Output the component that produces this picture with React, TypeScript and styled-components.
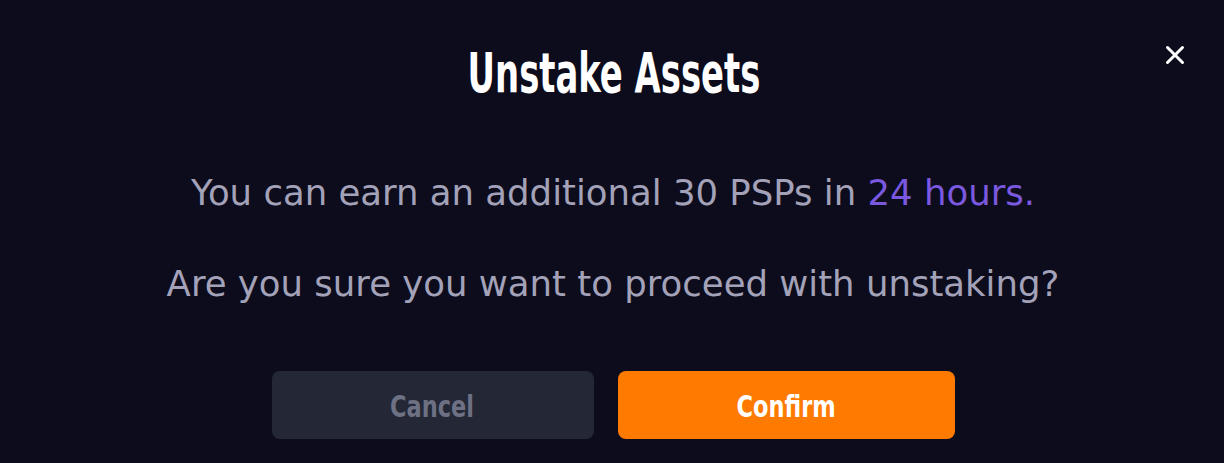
import React from 'react';
import styled, { createGlobalStyle } from 'styled-components';

const GlobalStyle = createGlobalStyle`
  html, body {
    margin: 0;
    padding: 0;
    background: #0c0c1d;
  }
`;

const Modal = styled.div`
  position: relative;
  width: 1224px;
  height: 463px;
  box-sizing: border-box;
  background: #0c0c1d;
  display: flex;
  flex-direction: column;
  align-items: center;
  padding-top: 41px;
`;

// narrow display face: no condensed font is installed, so squeeze a bold sans
const Title = styled.h2`
  margin: 0;
  font-family: 'DejaVu Sans', sans-serif;
  font-weight: 700;
  font-size: 55px;
  line-height: 64px;
  color: #ffffff;
  transform: translateX(2px) scaleX(0.615);
  white-space: nowrap;
`;

const CloseButton = styled.button`
  position: absolute;
  top: 43px;
  right: 37px;
  width: 24px;
  height: 24px;
  padding: 0;
  border: 0;
  background: transparent;
  cursor: pointer;
  display: flex;
  align-items: center;
  justify-content: center;
`;

const Message = styled.p<{ $gap: number }>`
  margin: ${({ $gap }) => $gap}px 0 0;
  font-family: 'DejaVu Sans', sans-serif;
  font-size: 35.5px;
  line-height: 44px;
  color: #a3a2b8;
  padding-left: 2px;
  white-space: nowrap;
`;

const Highlight = styled.span`
  color: #7a58df;
`;

const Actions = styled.div`
  display: flex;
  gap: 24px;
  margin-top: 65px;
  padding-left: 2px;
`;

const ActionButton = styled.button<{ $primary?: boolean; $width: number }>`
  width: ${({ $width }) => $width}px;
  height: 68px;
  padding: 3px 0 0;
  border: 0;
  border-radius: 8px;
  background: ${({ $primary }) => ($primary ? '#ff7a00' : '#232736')};
  color: ${({ $primary }) => ($primary ? '#ffffff' : '#6e7184')};
  display: flex;
  align-items: center;
  justify-content: center;
  cursor: pointer;
`;

const ButtonLabel = styled.span`
  display: inline-block;
  font-family: 'DejaVu Sans', sans-serif;
  font-weight: 700;
  font-size: 30px;
  line-height: 36px;
  transform: scaleX(0.75);
  white-space: nowrap;
`;

export default function App() {
  return (
    <>
      <GlobalStyle />
      <Modal>
        <Title>Unstake Assets</Title>
        <CloseButton aria-label="Close">
          <svg width="22" height="22" viewBox="0 0 22 22">
            <path d="M3.5 3.5 L18.5 18.5 M18.5 3.5 L3.5 18.5" stroke="#ffffff" strokeWidth="3" strokeLinecap="round" />
          </svg>
        </CloseButton>
        <Message $gap={66}>
          You can earn an additional 30 PSPs in <Highlight>24 hours.</Highlight>
        </Message>
        <Message $gap={47}>Are you sure you want to proceed with unstaking?</Message>
        <Actions>
          <ActionButton $width={322}>
            <ButtonLabel>Cancel</ButtonLabel>
          </ActionButton>
          <ActionButton $primary $width={337}>
            <ButtonLabel>Confirm</ButtonLabel>
          </ActionButton>
        </Actions>
      </Modal>
    </>
  );
}
